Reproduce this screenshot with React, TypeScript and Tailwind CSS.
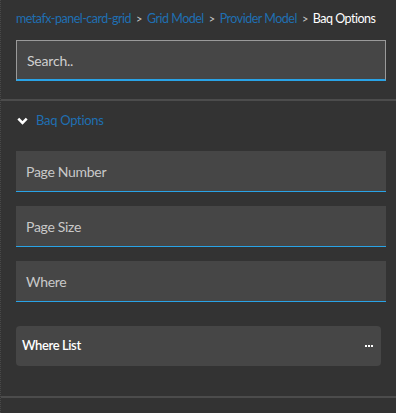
import React from "react";

const Field = ({ label }: { label: string }) => (
  <div className="ml-[15px] mr-[10px] h-[41px] bg-[#464646] border-b border-[#29a3e6] flex items-center pl-[10px] mb-[14px]">
    <span className="text-[14px] tracking-[-0.3px] text-[#c9c9c9] pt-[1px]">{label}</span>
  </div>
);

const Sep = () => <span className="text-[#c8c8c8] mx-[5px] text-[11px]">&gt;</span>;

export default function App() {
  return (
    <div
      className="w-[396px] h-[413px] bg-[#333333] border-l border-dotted border-[#484848] overflow-hidden"
      style={{ fontFamily: "Lato, 'Noto Sans', sans-serif" }}
    >
      <div className="h-[40px] pt-[10px] pl-[15px] text-[12.5px] tracking-[-0.5px] leading-[18px] flex items-start whitespace-nowrap">
        <span className="text-[#1f6fb2]">metafx-panel-card-grid</span>
        <Sep />
        <span className="text-[#1f6fb2]">Grid Model</span>
        <Sep />
        <span className="text-[#1f6fb2]">Provider Model</span>
        <Sep />
        <span className="text-white">Baq Options</span>
      </div>
      <div className="ml-[15px] mr-[10px] h-[41px] bg-[#464646] border border-b-2 border-[#9a9a9a] border-b-[#29a3e6] flex items-center pl-[10px]">
        <span className="text-[14px] tracking-[-0.2px] text-[#cfcfcf]">Search..</span>
      </div>
      <div className="mt-[18px] h-[2px] bg-[#4c4c4c]" />
      <div className="h-[40px] flex items-center pl-[16px]">
        <svg width="11" height="8" viewBox="0 0 11 8" className="mr-[8px]">
          <path d="M1.3 1.6 L5.5 5.8 L9.7 1.6" stroke="#ffffff" strokeWidth="2.6" fill="none" />
        </svg>
        <span className="text-[13px] tracking-[-0.3px] text-[#1f6fb2]">Baq Options</span>
      </div>
      <div className="mt-[10px]">
        <Field label="Page Number" />
        <Field label="Page Size" />
        <Field label="Where" />
      </div>
      <div className="ml-[15px] mr-[15px] mt-[24px] h-[40px] bg-[#464646] rounded-[4px] flex items-center justify-between pl-[6px] pr-[8px]">
        <span className="text-[13px] tracking-[-0.4px] font-semibold text-white">Where List</span>
        <span className="flex gap-[1px]">
          <span className="w-[2px] h-[2px] bg-white" />
          <span className="w-[2px] h-[2px] bg-white" />
          <span className="w-[2px] h-[2px] bg-white" />
        </span>
      </div>
      <div className="mt-[30px] h-[2px] bg-[#4c4c4c]" />
    </div>
  );
}
